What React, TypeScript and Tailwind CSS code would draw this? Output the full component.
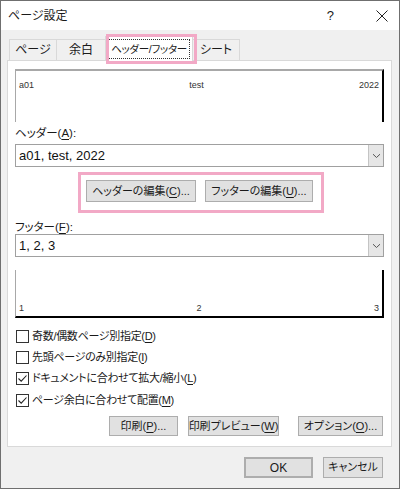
import React from "react";

const Key = ({ k }: { k: string }) => <span className="underline underline-offset-2">{k}</span>;

const Btn = ({ children, className = "" }: { children: React.ReactNode; className?: string }) => (
  <div className={`flex items-center justify-center bg-[#e1e1e1] border border-[#adadad] text-[11px] text-[#1a1a1a] ${className}`}>
    <span className="whitespace-nowrap">{children}</span>
  </div>
);

const Check = ({ checked }: { checked: boolean }) => (
  <div className="w-[13px] h-[13px] shrink-0 border border-[#333] bg-white flex items-center justify-center">
    {checked && (
      <svg width="11" height="11" viewBox="0 0 11 11">
        <path d="M1.5 5.5 L4.2 8.2 L9.5 2.5" fill="none" stroke="#222" strokeWidth="1.1" />
      </svg>
    )}
  </div>
);

const Combo = ({ value }: { value: string }) => (
  <div className="h-[23px] flex border border-[#a0a0a0] bg-white">
    <div className="flex-1 flex items-center pl-[3px] text-[13px] text-[#111]">{value}</div>
    <div className="w-[15px] bg-[#e6e6e6] border-l border-[#c4c4c4] flex items-center justify-center">
      <svg width="9" height="6" viewBox="0 0 9 6">
        <path d="M1 1.2 L4.5 4.5 L8 1.2" fill="none" stroke="#555" strokeWidth="1" />
      </svg>
    </div>
  </div>
);

export default function App() {
  const tabs = [
    { label: "ページ", w: "w-[48px]" },
    { label: "余白", w: "w-[50px]" },
  ];
  const checks = [
    { label: "奇数/偶数ページ別指定(", k: "D", on: false, mt: "" },
    { label: "先頭ページのみ別指定(", k: "I", on: false, mt: "" },
    { label: "ドキュメントに合わせて拡大/縮小(", k: "L", on: true, mt: "" },
    { label: "ページ余白に合わせて配置(", k: "M", on: true, mt: "mt-[1px]" },
  ];

  return (
    <div
      className="relative w-[400px] h-[489px] overflow-hidden bg-[#f0f0f0] border border-[#6f6f6f] text-[#1a1a1a] [font-feature-settings:'palt']"
      style={{ fontFamily: '"Liberation Sans", "Noto Sans CJK JP", sans-serif' }}
    >
      {/* title bar */}
      <div className="h-[29px] bg-white flex items-center pl-[7px] pr-[11px]">
        <span className="text-[12px]">ページ設定</span>
        <span className="ml-auto mr-[42px] text-[13px]">?</span>
        <svg width="12" height="12" viewBox="0 0 12 12">
          <path d="M0.5 0.5 L11.5 11.5 M11.5 0.5 L0.5 11.5" stroke="#222" strokeWidth="1" />
        </svg>
      </div>

      <div className="pl-[6px] pr-[7px]">
        {/* tabs */}
        <div className="mt-[6px] h-[24px] flex items-end pl-[2px] text-[12px] whitespace-nowrap">
          {tabs.map((t) => (
            <div key={t.label} className={`${t.w} h-[21px] -mr-px border border-b-0 border-[#d9d9d9] flex items-center justify-center`}>
              {t.label}
            </div>
          ))}
          <div className="relative z-10 w-[88px] h-[25px] -mb-px -mr-px bg-white border border-b-0 border-[#d9d9d9] flex items-center justify-center">
            <span className="w-[82px] text-center text-[10.5px] tracking-[-0.3px] leading-[18px] border border-dotted border-[#333]">
              ヘッダー/フッター
            </span>
          </div>
          <div className="w-[48px] h-[21px] border border-b-0 border-[#d9d9d9] flex items-center justify-center">シート</div>
        </div>

        {/* panel */}
        <div className="h-[387px] bg-white border border-[#d9d9d9] px-[7px]">
          <div className="mt-[8px] h-[53px] border-t-2 border-l border-r-2 border-t-[#a8a8a8] border-l-[#a8a8a8] border-r-black pt-[8px] px-[3px] flex justify-between text-[9px] leading-[12px] text-[#333]">
            <span>a01</span>
            <span>test</span>
            <span>2022</span>
          </div>

          <div className="mt-[4px] text-[11.5px] leading-[14px]">
            ヘッダー(<Key k="A" />):
          </div>
          <div className="mt-[4px]">
            <Combo value="a01, test, 2022" />
          </div>

          <div className="mt-[13px] flex justify-center gap-[9px]">
            <Btn className="w-[110px] h-[22px]">
              ヘッダーの編集(<Key k="C" />)...
            </Btn>
            <Btn className="w-[108px] h-[22px]">
              フッターの編集(<Key k="U" />)...
            </Btn>
          </div>

          <div className="mt-[18px] text-[11.5px] leading-[14px]">
            フッター(<Key k="F" />):
          </div>
          <Combo value="1, 2, 3" />

          <div className="mt-[13px] h-[48px] border-l border-r-2 border-b-2 border-l-[#a8a8a8] border-r-black border-b-black px-[3px] pb-[2px] flex items-end justify-between text-[9px] leading-[12px] text-[#333]">
            <span>1</span>
            <span>2</span>
            <span>3</span>
          </div>

          <div className="mt-[8px] pl-[1px]">
            {checks.map((c) => (
              <div key={c.k} className={`h-[21px] flex items-center gap-[3px] text-[11px] tracking-[-0.3px] ${c.mt}`}>
                <Check checked={c.on} />
                <span className="whitespace-nowrap">
                  {c.label}
                  <Key k={c.k} />)
                </span>
              </div>
            ))}
          </div>

          <div className="mt-[5px] flex justify-end pr-[1px]">
            <Btn className="w-[69px] h-[20px]">
              印刷(<Key k="P" />)...
            </Btn>
            <Btn className="ml-[10px] w-[91px] h-[20px]">
              印刷プレビュー(<Key k="W" />)
            </Btn>
            <Btn className="ml-[19px] w-[85px] h-[20px]">
              オプション(<Key k="O" />)...
            </Btn>
          </div>
        </div>

        {/* dialog buttons */}
        <div className="mt-[10px] flex justify-end pr-[9px] gap-[10px]">
          <Btn className="w-[69px] h-[21px] border-2 border-[#0078d7] text-[12px]">OK</Btn>
          <Btn className="w-[60px] h-[21px]">キャンセル</Btn>
        </div>
      </div>

      {/* pink annotations */}
      <div className="absolute left-[105px] top-[33px] w-[91px] h-[30px] border-[3px] border-[#f2a9c6] pointer-events-none z-20" />
      <div className="absolute left-[77px] top-[171px] w-[246px] h-[41px] border-[3px] border-[#f2a9c6] pointer-events-none" />
    </div>
  );
}
